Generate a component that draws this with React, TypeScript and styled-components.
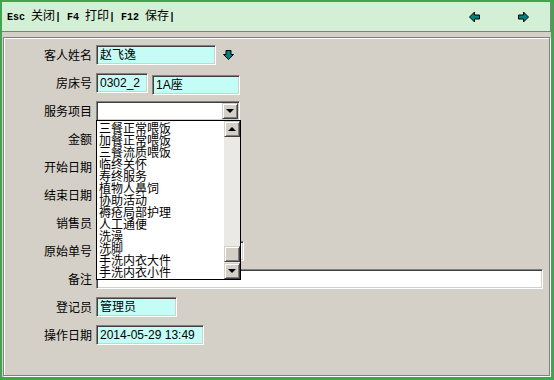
import { createGlobalStyle, styled } from "styled-components";

const CJK = `"Noto Sans CJK SC", "Liberation Sans", sans-serif`;
const VALUE = `"Liberation Sans", "Noto Sans CJK SC", sans-serif`;

const serviceItems = [
	"三餐正常喂饭",
	"加餐正常喂饭",
	"三餐流质喂饭",
	"临终关怀",
	"寿终服务",
	"植物人鼻饲",
	"协助活动",
	"褥疮局部护理",
	"人工通便",
	"洗澡",
	"洗脚",
	"手洗内衣大件",
	"手洗内衣小件",
];

function ArrowLeft() {
	return (
		<svg width="11" height="12" viewBox="0 0 11 12">
			<polygon points="0.5,6 5.5,1 5.5,4 10.5,4 10.5,8 5.5,8 5.5,11" fill="#008080" stroke="#000" strokeWidth="1" />
		</svg>
	);
}

function ArrowRight() {
	return (
		<svg width="11" height="12" viewBox="0 0 11 12">
			<polygon points="10.5,6 5.5,1 5.5,4 0.5,4 0.5,8 5.5,8 5.5,11" fill="#008080" stroke="#000" strokeWidth="1" />
		</svg>
	);
}

function ArrowDown() {
	return (
		<svg width="11" height="10" viewBox="0 0 11 10">
			<polygon points="3,0.5 8,0.5 8,4.5 10.5,4.5 5.5,9.5 0.5,4.5 3,4.5" fill="#008080" stroke="#000" strokeWidth="1" />
		</svg>
	);
}

export default function App() {
	return (
		<>
			<GlobalStyle />
			<Frame>
				<Toolbar>
					<ToolText>
						<Key>Esc </Key>关闭<Key>| F4 </Key>打印<Key>| F12 </Key>保存<Key>|</Key>
					</ToolText>
					<NavGroup>
						<ArrowLeft />
						<ArrowRight />
					</NavGroup>
				</Toolbar>
				<Panel>
					<Form>
						<Label>客人姓名</Label>
						<Cell>
							<Field $w={120} $bg="#c4fcf6">赵飞逸</Field>
							<IconSlot>
								<ArrowDown />
							</IconSlot>
						</Cell>

						<Label>房床号</Label>
						<Cell>
							<Field $w={52} $bg="#c4fcf6">0302_2</Field>
							<Field $w={88} $bg="#c4fcf6" $shift={2}>1A座</Field>
						</Cell>

						<Label>服务项目</Label>
						<Cell>
							<Combo $w={144}>
								<ComboValue />
								<DropBtn>
									<Tri $dir="down" />
								</DropBtn>
								<DropList>
									<Items>
										{serviceItems.map((item) => (
											<Item key={item}>{item}</Item>
										))}
									</Items>
									<ScrollBar>
										<ScrollBtn>
											<Tri $dir="up" />
										</ScrollBtn>
										<Track />
										<Thumb />
										<ScrollBtn>
											<Tri $dir="down" />
										</ScrollBtn>
									</ScrollBar>
								</DropList>
							</Combo>
						</Cell>

						<Label>金额</Label>
						<Cell>
							<Field $w={120} $bg="#fff" />
						</Cell>

						<Label>开始日期</Label>
						<Cell>
							<Field $w={120} $bg="#fff" />
						</Cell>

						<Label>结束日期</Label>
						<Cell>
							<Field $w={120} $bg="#fff" />
						</Cell>

						<Label>销售员</Label>
						<Cell>
							<Field $w={120} $bg="#fff" />
						</Cell>

						<Label>原始单号</Label>
						<Cell>
							<Field $w={148} $bg="#fff" />
						</Cell>

						<Label>备注</Label>
						<Cell>
							<Field $w={447} $bg="#fff" />
						</Cell>

						<Label>登记员</Label>
						<Cell>
							<Field $w={81} $bg="#c4fcf6">管理员</Field>
						</Cell>

						<Label>操作日期</Label>
						<Cell>
							<Field $w={108} $bg="#c4fcf6">2014-05-29 13:49</Field>
						</Cell>
					</Form>
				</Panel>
			</Frame>
		</>
	);
}

//#region Styled Components
const GlobalStyle = createGlobalStyle`
  html, body {
    margin: 0;
    padding: 0;
    background: #d4d0c8;
  }
  body {
    font-family: ${CJK};
    font-size: 12px;
    color: #000;
  }
`;

const Frame = styled.div`
  width: 554px;
  height: 380px;
  box-sizing: border-box;
  border: 2px solid #41a54f;
  border-right-width: 3px;
  border-bottom-width: 3px;
  background: #d4d0c8;
  display: flex;
  flex-direction: column;
`;

const Toolbar = styled.div`
  height: 29px;
  flex: none;
  display: flex;
  align-items: center;
  padding: 0 21px 0 5px;
  background: #d3efd5;
  border-bottom: 1px solid #808080;
  border-right: 1px solid #808080;
`;

const ToolText = styled.div`
  flex: 1;
  font-family: ${CJK};
  font-size: 12px;
  line-height: 14px;
  white-space: nowrap;
`;

const Key = styled.span`
  font-family: "Liberation Mono", monospace;
  font-size: 10px;
  font-weight: bold;
  white-space: pre;
`;

const NavGroup = styled.div`
  display: flex;
  align-items: center;
  gap: 38px;
  padding-top: 1px;
`;

const Panel = styled.div`
  flex: 1;
  margin: 5px 1px 1px 1px;
  border: 1px solid #808080;
  box-shadow: inset 1px 1px 0 #fff, 1px 1px 0 #fff;
  padding-top: 7px;
`;

const Form = styled.div`
  display: grid;
  grid-template-columns: 88px 1fr;
  grid-auto-rows: 20px;
  column-gap: 4px;
  row-gap: 8px;
  align-items: center;
`;

const Label = styled.div`
  text-align: right;
  white-space: nowrap;
  font-size: 12px;
  line-height: 14px;
`;

const Cell = styled.div`
  display: flex;
  align-items: flex-start;
  gap: 4px;
  height: 20px;
`;

const sunken = `
  box-sizing: border-box;
  height: 20px;
  border: 1px solid;
  border-color: #808080 #fff #fff #808080;
  box-shadow: inset 1px 1px 0 #404040, inset -1px -1px 0 #d4d0c8;
`;

const Field = styled.div<{ $w: number; $bg: string; $shift?: number }>`
  ${sunken}
  width: ${({ $w }) => $w}px;
  background: ${({ $bg }) => $bg};
  margin-top: ${({ $shift }) => $shift ?? 0}px;
  padding: 0 3px;
  font-family: ${VALUE};
  font-size: 12px;
  line-height: 18px;
  white-space: nowrap;
  overflow: hidden;
`;

const IconSlot = styled.div`
  display: flex;
  margin: 5px 0 0 3px;
`;

const Combo = styled.div<{ $w: number }>`
  ${sunken}
  position: relative;
  width: ${({ $w }) => $w}px;
  background: #fff;
  display: flex;
  padding: 1px;
  z-index: 5;
`;

const ComboValue = styled.div`
  flex: 1;
`;

const raised = `
  box-sizing: border-box;
  background: #d4d0c8;
  border: 1px solid;
  border-color: #d4d0c8 #404040 #404040 #d4d0c8;
  box-shadow: inset 1px 1px 0 #fff, inset -1px -1px 0 #808080;
`;

const DropBtn = styled.div`
  ${raised}
  width: 16px;
  height: 16px;
  display: flex;
  align-items: center;
  justify-content: center;
`;

const Tri = styled.span<{ $dir: "up" | "down" }>`
  width: 0;
  height: 0;
  border-left: 4px solid transparent;
  border-right: 4px solid transparent;
  ${({ $dir }) => ($dir === "down" ? "border-top: 4px solid #000;" : "border-bottom: 4px solid #000;")}
`;

const DropList = styled.div`
  position: absolute;
  top: 18px;
  left: -1px;
  width: 145px;
  height: 160px;
  box-sizing: border-box;
  border: 1px solid #000;
  background: #fff;
  display: flex;
`;

const Items = styled.div`
  flex: 1;
  overflow: hidden;
  display: flex;
  flex-direction: column;
  justify-content: flex-end;
  padding: 0 0 1px 2px;
`;

const Item = styled.div`
  flex: none;
  height: 12px;
  font-size: 12px;
  line-height: 12px;
  white-space: nowrap;
`;

const ScrollBar = styled.div`
  width: 16px;
  display: flex;
  flex-direction: column;
  background: #ebe9e5;
`;

const ScrollBtn = styled.div`
  ${raised}
  width: 16px;
  height: 16px;
  flex: none;
  display: flex;
  align-items: center;
  justify-content: center;
`;

const Track = styled.div`
  flex: 1;
`;

const Thumb = styled.div`
  ${raised}
  width: 16px;
  height: 16px;
  flex: none;
  margin-bottom: 1px;
`;
//#endregion
